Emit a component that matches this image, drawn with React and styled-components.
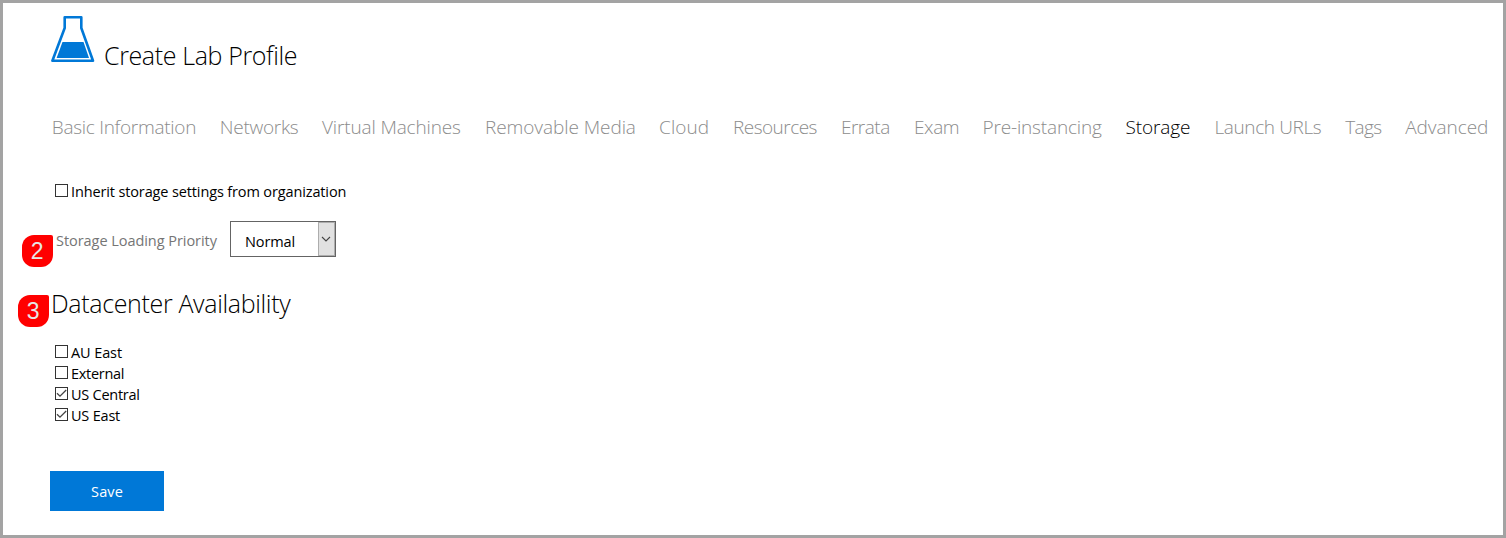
import React from 'react';
import styled, { createGlobalStyle } from 'styled-components';

const Global = createGlobalStyle`
  * { box-sizing: border-box; }
  body { margin: 0; background: #fff; font-family: "Open Sans", "Noto Sans", sans-serif; color: #000; }
`;
const Page = styled.main`
  width: 1506px;
  height: 538px;
  border: 3px solid #a3a3a3;
  padding: 12px 0 0 47px;
  overflow: hidden;
`;
const Header = styled.header`
  display: flex;
  height: 58px;
`;
const Flask = styled.svg`
  width: 46px;
  height: 48px;
  flex: none;
`;
const Title = styled.h1`
  margin: 22px 0 0 8px;
  font-size: 25px;
  line-height: 36px;
  font-weight: 300;
  letter-spacing: -0.37px;
  white-space: nowrap;
`;
const Heading = styled.h2`
  margin: 0;
  padding-left: 1px;
  font-size: 25px;
  line-height: 34px;
  font-weight: 300;
  letter-spacing: -0.34px;
  white-space: nowrap;
`;
const Tabs = styled.nav`
  display: flex;
  height: 32px;
  margin-top: 38px;
  padding-left: 1.8px;
`;
const Tab = styled.a`
  flex: none;
  width: ${p => p.$w}px;
  font-size: 19px;
  line-height: 32px;
  font-weight: 300;
  white-space: nowrap;
  color: ${p => (p.$active ? '#000' : '#8c8c8c')};
  letter-spacing: ${p => p.$track}px;
`;
const Form = styled.form`
  padding-top: 37px;
`;
const Option = styled.label`
  display: flex;
  align-items: center;
  height: 21px;
  padding-left: 5px;
  font-size: 14.5px;
`;
const BoxIcon = styled.svg`
  width: 13px;
  height: 13px;
  margin-right: 3px;
  flex: none;
`;
const OptionText = styled.span`
  padding-top: 2px;
  line-height: 19px;
  white-space: nowrap;
  letter-spacing: ${p => p.$track}px;
`;
const Field = styled.div`
  position: relative;
  display: flex;
  height: 36px;
  margin-top: 20px;
  padding-left: 6px;
`;
const FieldLabel = styled.span`
  width: 174px;
  font-size: 14.5px;
  line-height: 39px;
  letter-spacing: -0.05px;
  color: #757575;
`;
const Select = styled.div`
  display: flex;
  width: 106px;
  height: 36px;
  border: 1px solid #646464;
  font-size: 14.5px;
`;
const SelectValue = styled.span`
  flex: 1;
  padding-left: 14px;
  line-height: 39px;
  letter-spacing: -0.1px;
`;
const SelectArrow = styled.span`
  display: flex;
  align-items: center;
  justify-content: center;
  width: 17px;
  padding-right: 1px;
  border: 1px solid #adadad;
  background: #e1e1e1;
`;
const Section = styled.section`
  position: relative;
  margin-top: 29px;
`;
const Options = styled.div`
  padding-top: 21px;
`;
const Marker = styled.span`
  position: absolute;
  left: ${p => p.$x}px;
  top: ${p => p.$y}px;
  width: 30.5px;
  height: 32px;
  border-radius: 12px 2px 12px 12px;
  background: #f00;
  color: #e6e6e6;
  font: 23px/33px "Liberation Sans", Arial, sans-serif;
  text-align: center;
`;
const Save = styled.button`
  display: block;
  width: 114px;
  height: 40px;
  margin-top: 46px;
  padding: 1px 0 0;
  border: 0;
  background: #0078d7;
  color: #fff;
  font: 14.5px "Open Sans", sans-serif;
  letter-spacing: 0.1px;
`;

const tabs = [
  ['Basic Information', 168, -0.29],
  ['Networks', 102.2, -0.27],
  ['Virtual Machines', 163, -0.14],
  ['Removable Media', 174, -0.07],
  ['Cloud', 74, 0.1],
  ['Resources', 108, -0.52],
  ['Errata', 73, -0.5],
  ['Exam', 68.5, -0.4],
  ['Pre-instancing', 143, -0.16],
  ['Storage', 89, -0.12],
  ['Launch URLs', 130.7, -0.38],
  ['Tags', 60, -0.6],
  ['Advanced', 84, -0.05],
];
const datacenters = [
  ['AU East', false, -0.1],
  ['External', false, -0.3],
  ['US Central', true, -0.26],
  ['US East', true, -0.2],
];

function CheckOption({ checked, track, children }) {
  return (
    <Option>
      <BoxIcon viewBox="0 0 13 13" fill="none">
        <rect x=".5" y=".5" width="12" height="12" stroke="#333" />
        {checked && <path d="M2 6.2 5 9.2 11.2 3" stroke="#444" strokeWidth="1.3" />}
      </BoxIcon>
      <OptionText $track={track}>{children}</OptionText>
    </Option>
  );
}

export default function App() {
  return (
    <Page>
      <Global />
      <Header>
        <Flask viewBox="0 0 46 48" fill="none">
          <path
            d="M14.7 2.3H31.3V13L43 45.7H2.4L14.7 13Z"
            stroke="#0078d7" strokeWidth="2.6" strokeLinejoin="round"
          />
          <path d="M12.5 27H33.5L39 43H6.6Z" fill="#0078d7" />
        </Flask>
        <Title>Create Lab Profile</Title>
      </Header>
      <Tabs>
        {tabs.map(([name, w, track]) => (
          <Tab key={name} $w={w} $track={track} $active={name === 'Storage'}>{name}</Tab>
        ))}
      </Tabs>
      <Form>
        <CheckOption track={-0.13}>Inherit storage settings from organization</CheckOption>
        <Field>
          <Marker $x={-28} $y={14}>2</Marker>
          <FieldLabel>Storage Loading Priority</FieldLabel>
          <Select>
            <SelectValue>Normal</SelectValue>
            <SelectArrow>
              <svg width="10" height="6" viewBox="0 0 10 6" fill="none">
                <path d="M1 1 5 5 9 1" stroke="#444" strokeWidth="1.1" />
              </svg>
            </SelectArrow>
          </Select>
        </Field>
        <Section>
          <Marker $x={-32} $y={9}>3</Marker>
          <Heading>Datacenter Availability</Heading>
          <Options>
            {datacenters.map(([name, checked, track]) => (
              <CheckOption key={name} checked={checked} track={track}>{name}</CheckOption>
            ))}
          </Options>
        </Section>
        <Save type="button">Save</Save>
      </Form>
    </Page>
  );
}
